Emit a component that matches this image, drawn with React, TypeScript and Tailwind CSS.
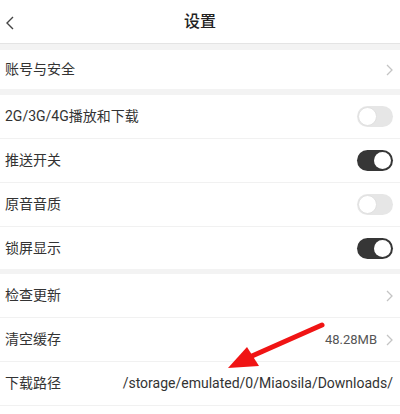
import React from "react";

const font = { fontFamily: "Roboto, 'Noto Sans CJK SC', sans-serif" };

function Chevron() {
  return (
    <svg width="7" height="12" viewBox="0 0 7 12" className="shrink-0">
      <path d="M1 1l5 5-5 5" fill="none" stroke="#c4c4c4" strokeWidth="1.3" />
    </svg>
  );
}

function Toggle({ on }: { on: boolean }) {
  return (
    <div
      className={
        on
          ? "w-[36px] h-[21px] rounded-full bg-[#363636] flex items-center justify-end px-[2px]"
          : "w-[36px] h-[21px] rounded-full bg-[#e6e6e6] flex items-center justify-start px-[1px]"
      }
    >
      <div
        className={
          on
            ? "w-[17px] h-[17px] rounded-full bg-white"
            : "w-[19px] h-[19px] rounded-full bg-white border border-[#e0e0e0]"
        }
      />
    </div>
  );
}

function Row({
  label,
  right,
  last,
  h = "h-[44px]",
}: {
  label: string;
  right?: React.ReactNode;
  last?: boolean;
  h?: string;
}) {
  return (
    <div className={`${h} flex items-center pl-[5px] pr-[7px] bg-white ${last ? "" : "border-b border-[#f1f1f1]"}`}>
      <span className="text-[14px] text-[#333]">{label}</span>
      <div className="ml-auto flex items-center gap-[9px]">{right}</div>
    </div>
  );
}

export default function App() {
  return (
    <div className="w-[400px] h-[414px] bg-white overflow-hidden relative" style={font}>
      {/* Header */}
      <header className="h-[44px] flex items-center relative border-b border-[#e4e4e4]">
        <svg width="10" height="14" viewBox="0 0 10 14" className="absolute left-[5px] top-[16px]">
          <path d="M8 1L2 7l6 6" fill="none" stroke="#444" strokeWidth="1.4" />
        </svg>
        <h1 className="w-full text-center text-[16px] font-medium text-[#222]">设置</h1>
      </header>
      <div className="h-[6px] bg-[#f3f3f3]" />

      <Row label="账号与安全" h="h-[39px]" last right={<Chevron />} />
      <div className="h-[6px] bg-[#f3f3f3]" />

      <Row label="2G/3G/4G播放和下载" right={<Toggle on={false} />} />
      <Row label="推送开关" right={<Toggle on />} />
      <Row label="原音音质" right={<Toggle on={false} />} />
      <Row label="锁屏显示" h="h-[42px]" last right={<Toggle on />} />
      <div className="h-[5px] bg-[#f3f3f3]" />

      <Row label="检查更新" right={<Chevron />} />
      <Row label="清空缓存" right={<><span className="text-[13px] text-[#555]">48.28MB</span><Chevron /></>} />
      <Row
        label="下载路径"
        right={<span className="text-[14px] text-[#333]">/storage/emulated/0/Miaosila/Downloads/</span>}
      />

      {/* red annotation arrow */}
      <svg width="400" height="414" className="absolute left-0 top-0 pointer-events-none">
        <path d="M322 325 L252 356" stroke="#f01414" strokeWidth="5" strokeLinecap="round" />
        <polygon points="228,368 247,347 259,366" fill="#f01414" />
      </svg>
    </div>
  );
}
